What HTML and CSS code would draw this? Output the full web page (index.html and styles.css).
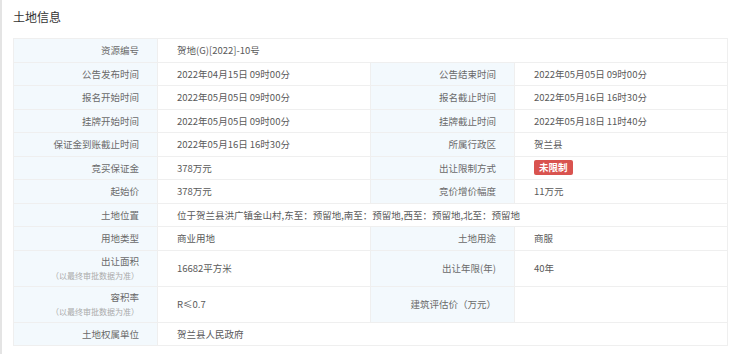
FILE: index.html
```html
<!DOCTYPE html>
<html lang="zh-CN">
<head>
    <meta charset="UTF-8">
    <title>土地信息</title>
    <link rel="stylesheet" href="styles.css">
</head>
<body>
    <div class="panel">
        <h2 class="title">土地信息</h2>

        <table class="info-table">
            <colgroup>
                <col class="col-label">
                <col class="col-value">
                <col class="col-label">
                <col class="col-value">
            </colgroup>
            <tr>
                <td class="label">资源编号</td>
                <td class="value" colspan="3">贺地(G)[2022]-10号</td>
            </tr>
            <tr>
                <td class="label">公告发布时间</td>
                <td class="value">2022年04月15日 09时00分</td>
                <td class="label">公告结束时间</td>
                <td class="value">2022年05月05日 09时00分</td>
            </tr>
            <tr>
                <td class="label">报名开始时间</td>
                <td class="value">2022年05月05日 09时00分</td>
                <td class="label">报名截止时间</td>
                <td class="value">2022年05月16日 16时30分</td>
            </tr>
            <tr>
                <td class="label">挂牌开始时间</td>
                <td class="value">2022年05月05日 09时00分</td>
                <td class="label">挂牌截止时间</td>
                <td class="value">2022年05月18日 11时40分</td>
            </tr>
            <tr>
                <td class="label">保证金到账截止时间</td>
                <td class="value">2022年05月16日 16时30分</td>
                <td class="label">所属行政区</td>
                <td class="value">贺兰县</td>
            </tr>
            <tr>
                <td class="label">竞买保证金</td>
                <td class="value">378万元</td>
                <td class="label">出让限制方式</td>
                <td class="value"><span class="badge">未限制</span></td>
            </tr>
            <tr>
                <td class="label">起始价</td>
                <td class="value">378万元</td>
                <td class="label">竞价增价幅度</td>
                <td class="value">11万元</td>
            </tr>
            <tr>
                <td class="label">土地位置</td>
                <td class="value" colspan="3">位于贺兰县洪广镇金山村,东至：预留地,南至：预留地,西至：预留地,北至：预留地</td>
            </tr>
            <tr>
                <td class="label">用地类型</td>
                <td class="value">商业用地</td>
                <td class="label">土地用途</td>
                <td class="value">商服</td>
            </tr>
            <tr class="tall">
                <td class="label">出让面积<span class="note">（以最终审批数据为准）</span></td>
                <td class="value">16682平方米</td>
                <td class="label">出让年限(年)</td>
                <td class="value">40年</td>
            </tr>
            <tr class="tall">
                <td class="label">容积率<span class="note">（以最终审批数据为准）</span></td>
                <td class="value">R≤0.7</td>
                <td class="label">建筑评估价（万元）</td>
                <td class="value"></td>
            </tr>
            <tr>
                <td class="label">土地权属单位</td>
                <td class="value" colspan="3">贺兰县人民政府</td>
            </tr>
        </table>
    </div>
</body>
</html>
```

FILE: styles.css
```css
body {
    margin: 0;
    background: #FFF;
    font-family: "Noto Sans CJK SC", "Noto Sans", sans-serif;
}

.panel {
    border-left: 2px solid #e4e4e4;
    padding: 9px 0 0 11px;
    height: 345px;
}

.title {
    margin: 0 0 13px 0;
    font-size: 12px;
    font-weight: normal;
    line-height: 16px;
    color: #333;
}

.info-table {
    width: 714px;
    table-layout: fixed;
    border-collapse: collapse;
    border: 1px solid #efefef;
    font-size: 9.5px;
}

.col-label {
    width: 144px;
}

.col-value {
    width: 213px;
}

.info-table tr {
    height: 23.5px;
}

.info-table tr.tall {
    height: 36px;
}

.info-table td {
    border: 1px solid #efefef;
    padding: 0;
    line-height: 14px;
}

.label {
    background: #f3f9fd;
    color: #6a6a6a;
    text-align: right;
    padding-right: 18px !important;
}

.value {
    color: #5a5a5a;
    padding-left: 19px !important;
}

.note {
    display: block;
    font-size: 8px;
    line-height: 15px;
    color: #aaa;
}

.badge {
    display: inline-block;
    background: #d9534f;
    color: #FFF;
    font-weight: bold;
    padding: 0 5px;
    line-height: 15px;
    border-radius: 2px;
}
```
